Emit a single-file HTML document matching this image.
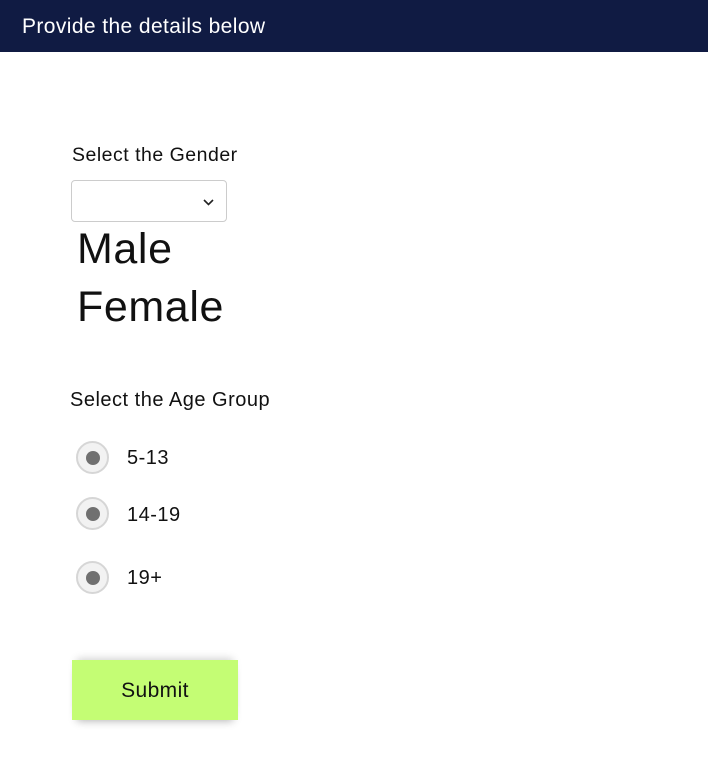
<!DOCTYPE html>
<html><head><style>
body{margin:0;width:708px;height:768px;background:#fff;font-family:"Liberation Sans",sans-serif;color:#111;position:relative;overflow:hidden}
.hdr{position:absolute;left:0;top:0;width:708px;height:52px;background:#101b43;color:#fff;font-size:21px;letter-spacing:0.4px;line-height:54px;padding-left:22px;box-sizing:border-box}
.t{position:absolute;white-space:nowrap}
.s{font-size:20px;letter-spacing:0.5px}
.sel{position:absolute;left:71px;top:180px;width:154px;height:40px;border:1px solid #ccc;border-radius:4px}
.radio{position:absolute;left:76px;width:33px;height:33px;border-radius:50%;background:#f2f2f2;border:2px solid #d6d6d6;box-sizing:border-box}
.radio::after{content:"";position:absolute;left:7.5px;top:7.5px;width:14px;height:14px;border-radius:50%;background:#707070}
.btn{position:absolute;left:72px;top:660px;width:166px;height:60px;background:#c4fd74;font-size:21px;letter-spacing:0.4px;text-align:center;line-height:62px;box-shadow:0 6px 8px -5px rgba(0,0,0,.3),0 -6px 8px -5px rgba(0,0,0,.2)}
</style></head><body>
<div class="hdr">Provide the details below</div>
<div class="t s" style="left:72px;top:144px;font-size:19.5px">Select the Gender</div>
<div class="sel"><svg style="position:absolute;left:131px;top:18px" width="11" height="7" viewBox="0 0 11 7"><path d="M1 1l4.5 4.5L10 1" fill="none" stroke="#222" stroke-width="1.6"/></svg></div>
<div class="t" style="left:77px;top:225px;font-size:43px;letter-spacing:0.6px">Male</div>
<div class="t" style="left:77px;top:283px;font-size:43px;letter-spacing:0.6px">Female</div>
<div class="t s" style="left:70px;top:389px">Select the Age Group</div>
<div class="radio" style="top:441px"></div><div class="t s" style="left:127px;top:447px">5-13</div>
<div class="radio" style="top:497px"></div><div class="t s" style="left:127px;top:504px">14-19</div>
<div class="radio" style="top:561px"></div><div class="t s" style="left:127px;top:567px">19+</div>
<div class="btn">Submit</div>
</body></html>
